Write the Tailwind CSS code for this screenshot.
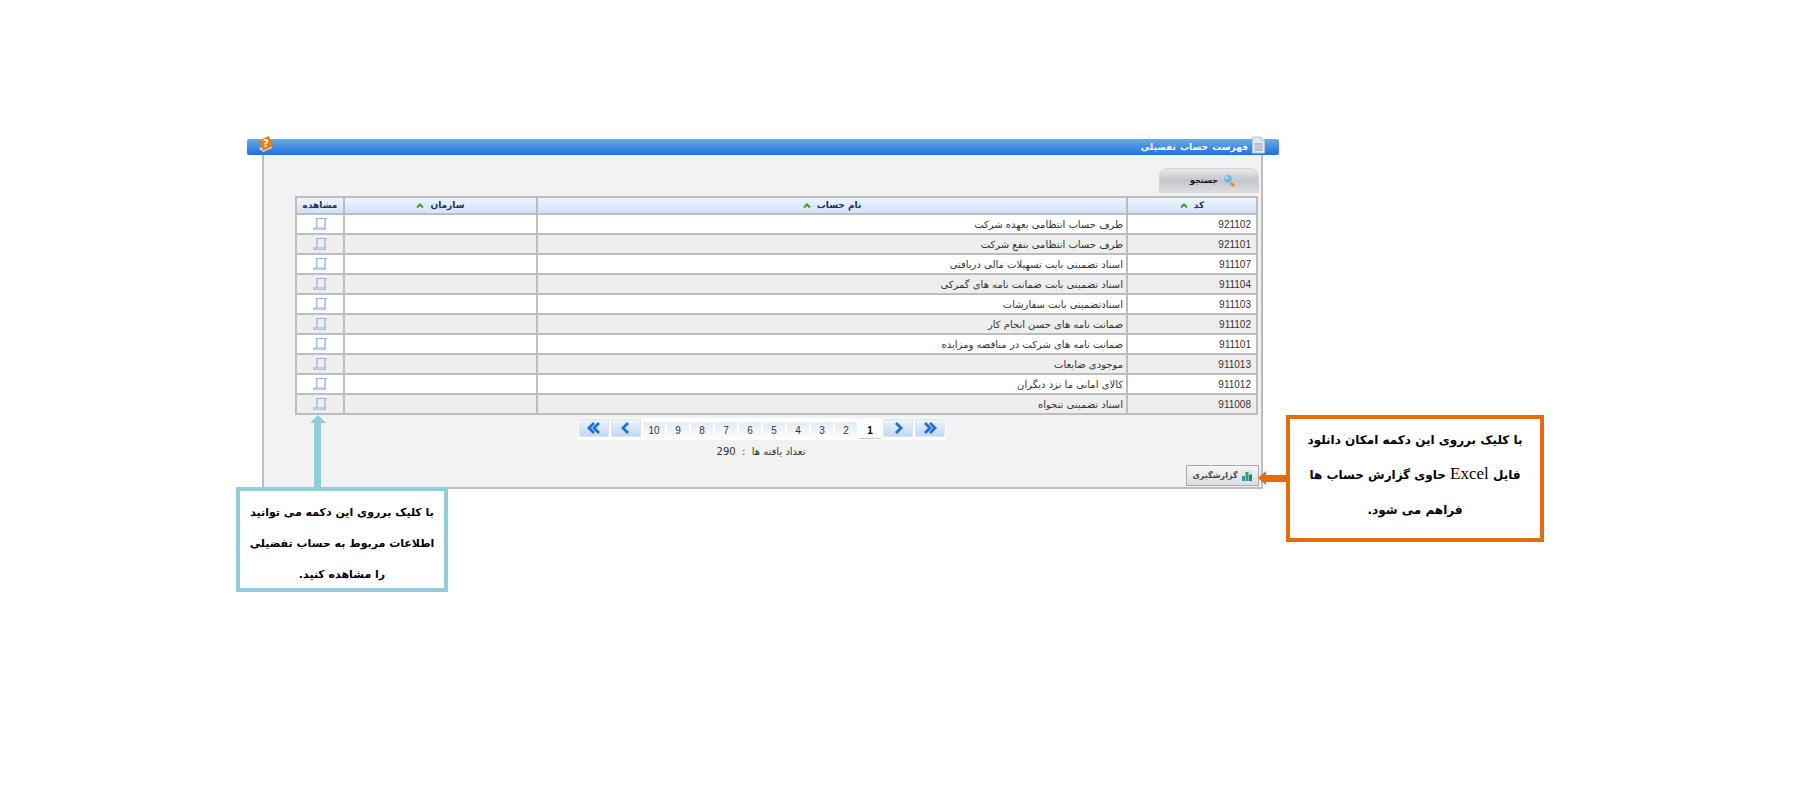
<!DOCTYPE html>
<html lang="fa" dir="rtl">
<head>
    <meta charset="UTF-8">
    <title>فهرست حساب تفضیلی</title>
    <script src="https://cdn.jsdelivr.net/npm/@tailwindcss/browser@4"></script>
</head>
<body class="bg-white">
<div class="relative w-[1800px] h-[800px] overflow-hidden font-['DejaVu_Sans',sans-serif]" dir="ltr">
    <div class="pt-[139px] pl-[247px] w-[1279px]">
        <!-- Title bar -->
        <div dir="rtl" class="relative h-[16px] flex items-center bg-gradient-to-b from-[#6aa9ec] to-[#1f6fdc] rounded-[2px] pr-[13px] gap-[3px] text-white text-[9px] font-bold [word-spacing:1px]">
            <svg width="15" height="18" viewBox="0 0 14 18" class="-mt-[5px]">
                <path d="M1 1h8l4 4v12H1z" fill="#e4e9f1" stroke="#b9c6d8"/>
                <path d="M9 1v4h4z" fill="#fff" stroke="#b9c6d8"/>
                <path d="M3 7h8v8H3z" fill="#aebcd2"/>
                <path d="M3 9.500h8M3 12h8" stroke="#d5dce8"/>
            </svg>
            <span class="mt-[1px]">فهرست حساب تفضیلی</span>
            <svg width="20" height="20" viewBox="0 0 20 20" class="absolute left-[8px] -top-[4px]">
                <path d="M4 13 8 17 17 13 15 10z" fill="#f3e2cc"/>
                <path d="M4 5.500 14 1l4 10-10 5z" fill="#ee7a1c"/>
                <text x="11" y="12" font-size="10" font-weight="bold" fill="#fff" text-anchor="middle">?</text>
            </svg>
        </div>

        <!-- Panel -->
        <div class="ml-[15px] mr-[16px] h-[334px] bg-[#f2f2f2] border-x-2 border-b-2 border-[#bdbdbd] pt-[13px] pl-[31px] pr-[2px]">
            <div class="flex justify-end h-[28px]">
                <button dir="rtl" class="w-[100px] h-[25px] flex items-center justify-center gap-[5px] pl-[8px] bg-gradient-to-b from-[#e8e9ec] via-[#c3c6cc] to-[#dcdde0] border border-[#d5d5d5] rounded-t-[8px] text-[8px] font-bold text-[#111]">
                    <svg width="13" height="14" viewBox="0 0 13 14">
                        <path d="M7.500 8.500 11 12" stroke="#ee8a2e" stroke-width="3"/>
                        <circle cx="5" cy="5" r="4.200" fill="#6fb6e8" stroke="#a9d4f0"/>
                        <circle cx="3.800" cy="3.800" r="1.300" fill="#d6eefb"/>
                    </svg>
                    <span>جستجو</span>
                </button>
            </div>

            <table class="w-[961px] border-collapse table-fixed border-2 border-[#bdbdbd] text-[10px] text-[#333]">
                <colgroup>
                    <col class="w-[48px]">
                    <col class="w-[193px]">
                    <col class="w-[590px]">
                    <col class="w-[130px]">
                </colgroup>
                <thead>
                <tr dir="rtl" class="h-[17px] bg-gradient-to-b from-[#f1f6fd] to-[#cfe2f8] text-[#17325c] text-[9px]">
                    <th class="border-2 border-[#bdbdbd] font-bold">مشاهده</th>
                    <th class="border-2 border-[#bdbdbd] font-bold">
                        <div class="flex items-center justify-center gap-[6px]"><span>سازمان</span><svg width="8" height="5" viewBox="0 0 8 5" fill="none" stroke="#3f9a2b" stroke-width="2"><path d="M1 4.500 4 1.500l3 3"/></svg></div>
                    </th>
                    <th class="border-2 border-[#bdbdbd] font-bold">
                        <div class="flex items-center justify-center gap-[6px]"><span>نام حساب</span><svg width="8" height="5" viewBox="0 0 8 5" fill="none" stroke="#3f9a2b" stroke-width="2"><path d="M1 4.500 4 1.500l3 3"/></svg></div>
                    </th>
                    <th class="border-2 border-[#bdbdbd] font-bold">
                        <div class="flex items-center justify-center gap-[6px]"><span>کد</span><svg width="8" height="5" viewBox="0 0 8 5" fill="none" stroke="#3f9a2b" stroke-width="2"><path d="M1 4.500 4 1.500l3 3"/></svg></div>
                    </th>
                </tr>
                </thead>
                <tbody id="rows"></tbody>
            </table>

            <!-- Pagination -->
            <div class="mt-[3px] pl-[283px]">
                <div id="pager" class="flex bg-white w-[368px] h-[22px] pl-[1px] pt-[1px] gap-[2px]"></div>
            </div>
            <div dir="rtl" class="w-[932px] mt-[4px] text-center text-[10px] text-[#333]">تعداد یافته ها &nbsp;:&nbsp; 290</div>

            <div class="flex justify-end mt-[6px]">
                <button dir="rtl" class="w-[73px] h-[21px] flex items-center justify-center gap-[3px] bg-gradient-to-b from-[#f6f6f6] to-[#dedede] border border-[#a9a9a9] text-[8px] font-bold text-[#444]">
                    <svg width="12" height="11" viewBox="0 0 12 11">
                        <path d="M0 0h12v11H0z" fill="#dbe8f3"/>
                        <path d="M1 6h3v5H1z" fill="#2f8fd8"/>
                        <path d="M4.500 2h3v9h-3z" fill="#3da33a"/>
                        <path d="M8 4.500h3V11H8z" fill="#1f78c4"/>
                    </svg>
                    <span>گزارشگیری</span>
                </button>
            </div>
        </div>
    </div>

    <!-- Left callout -->
    <div class="absolute left-[314px] top-[422px] w-[7px] h-[65px] bg-[#92cddc]"></div>
    <div class="absolute left-[310px] top-[415px] w-0 h-0 border-x-[8px] border-x-transparent border-b-[8px] border-b-[#92cddc]"></div>
    <div dir="rtl" class="absolute left-[236px] top-[487px] w-[212px] h-[105px] bg-white border-[4px] border-[#92cddc] pt-[8px] flex flex-col items-center justify-center text-[11px] font-bold leading-[31px] text-black">
        <p>با کلیک برروی این دکمه می توانید</p>
        <p>اطلاعات مربوط به حساب تفضیلی</p>
        <p>را مشاهده کنید.</p>
    </div>

    <!-- Right callout -->
    <div class="absolute left-[1265px] top-[475px] w-[21px] h-[7px] bg-[#e46c0a]"></div>
    <div class="absolute left-[1258px] top-[471px] w-0 h-0 border-y-[7px] border-y-transparent border-r-[8px] border-r-[#e46c0a]"></div>
    <div dir="rtl" class="absolute left-[1286px] top-[415px] w-[258px] h-[127px] bg-white border-[4px] border-[#e46c0a] pb-[7px] flex flex-col items-center justify-center text-[12px] font-bold leading-[34.500px] text-black">
        <p>با کلیک برروی این دکمه امکان دانلود</p>
        <p>فایل <span class="font-['Liberation_Serif',serif] font-normal text-[17px]">Excel</span> حاوی گزارش حساب ها</p>
        <p>فراهم می شود.</p>
    </div>
</div>

<script>
    const rows = [
        ['921102', 'طرف حساب انتظامی بعهده شرکت'],
        ['921101', 'طرف حساب انتظامی بنفع شرکت'],
        ['911107', 'اسناد تضمینی بابت تسهیلات مالی دریافتی'],
        ['911104', 'اسناد تضمینی بابت ضمانت نامه های گمرکی'],
        ['911103', 'اسنادتضمینی بابت سفارشات'],
        ['911102', 'ضمانت نامه های حسن انجام کار'],
        ['911101', 'ضمانت نامه های شرکت در مناقصه ومزایده'],
        ['911013', 'موجودی ضایعات'],
        ['911012', 'کالای امانی ما نزد دیگران'],
        ['911008', 'اسناد تضمینی تنخواه']
    ];
    // scroll icon used in the view column
    const scrollIcon = `<svg width="14" height="14" viewBox="0 0 14 14" class="mx-auto block" stroke-width="1.200">
        <path d="M3.500 1.500H13c-.8.800-1 1.500-1 2.500v7" fill="none" stroke="#8fb2e0"/>
        <path d="M3.500 1.500c.6 2 .6 6.500 0 9.500h8.500v1.500H2C1 12.500.8 11.500 1 11h2.500" fill="#fff" stroke="#8fb2e0"/>
        <path d="M2 12h9" stroke="#bcd3ef"/>
    </svg>`;

    document.getElementById('rows').innerHTML = rows.map((row, i) => `
        <tr class="h-[20px] ${i % 2 ? 'bg-[#eeeeee]' : 'bg-white'}">
            <td class="border-2 border-[#bdbdbd]">${scrollIcon}</td>
            <td class="border-2 border-[#bdbdbd]"></td>
            <td dir="rtl" class="border-2 border-[#bdbdbd] pr-[3px]">${row[1]}</td>
            <td class="border-2 border-[#bdbdbd] text-right pr-[5px] font-['Liberation_Sans',sans-serif]">${row[0]}</td>
        </tr>`).join('');

    const navBtn = path => `<div class="w-[30px] h-[18px] flex items-center justify-center bg-gradient-to-b from-[#eef4fc] to-[#bfd7f4] border border-[#dbe5f2]"><svg width="14" height="12" viewBox="0 0 14 12" fill="none" stroke="#1f6fd0" stroke-width="2.800"><path d="${path}"/></svg></div>`;
    const pageBtn = n => `<div class="w-[22px] h-[17px] mt-[3px] flex items-center justify-center text-[10px] font-['Liberation_Sans',sans-serif] ${n === 1 ? 'bg-white text-black font-bold border-b border-[#ccc]' : 'bg-gradient-to-b from-[#e3ebf5] to-white text-[#333]'}">${n}</div>`;
    const pages = [10, 9, 8, 7, 6, 5, 4, 3, 2, 1].map(pageBtn).join('');
    document.getElementById('pager').innerHTML =
        navBtn('M7 1 2 6l5 5M12 1 7 6l5 5') + navBtn('M9 1 4 6l5 5') + pages +
        navBtn('M5 1l5 5-5 5') + navBtn('M2 1l5 5-5 5M7 1l5 5-5 5');
</script>
</body>
</html>
